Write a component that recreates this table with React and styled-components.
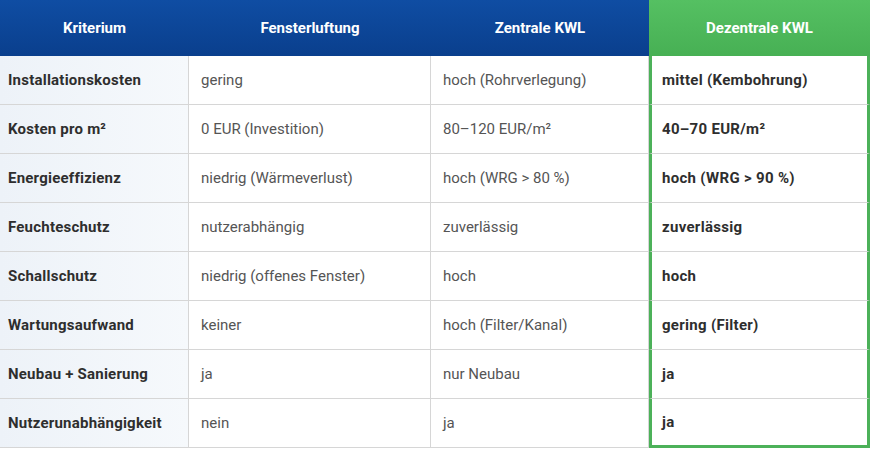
import styled, { createGlobalStyle } from 'styled-components';

const GlobalStyle = createGlobalStyle`
    body {
        margin: 0;
        background: #ffffff;
        font-family: Roboto, 'Liberation Sans', sans-serif;
    }
`

const rows = [
    ['Installationskosten', 'gering', 'hoch (Rohrverlegung)', 'mittel (Kembohrung)'],
    ['Kosten pro m²', '0 EUR (Investition)', '80–120 EUR/m²', '40–70 EUR/m²'],
    ['Energieeffizienz', 'niedrig (Wärmeverlust)', 'hoch (WRG > 80 %)', 'hoch (WRG > 90 %)'],
    ['Feuchteschutz', 'nutzerabhängig', 'zuverlässig', 'zuverlässig'],
    ['Schallschutz', 'niedrig (offenes Fenster)', 'hoch', 'hoch'],
    ['Wartungsaufwand', 'keiner', 'hoch (Filter/Kanal)', 'gering (Filter)'],
    ['Neubau + Sanierung', 'ja', 'nur Neubau', 'ja'],
    ['Nutzerunabhängigkeit', 'nein', 'ja', 'ja'],
];

const App = () => {
    return (
        <>
            <GlobalStyle />
            <Table>
                <colgroup>
                    <col style={{width: '189px'}} />
                    <col style={{width: '242px'}} />
                    <col style={{width: '218px'}} />
                    <col style={{width: '221px'}} />
                </colgroup>
                <thead>
                    <tr>
                        <Th>Kriterium</Th>
                        <Th>Fensterluftung</Th>
                        <Th>Zentrale KWL</Th>
                        <Th $green>Dezentrale KWL</Th>
                    </tr>
                </thead>
                <tbody>
                    {rows.map((row, index) =>
                        <tr key={index}>
                            <Label>{row[0]}</Label>
                            <Cell>{row[1]}</Cell>
                            <Cell>{row[2]}</Cell>
                            <Best $last={index === rows.length - 1}>{row[3]}</Best>
                        </tr>
                    )}
                </tbody>
            </Table>
        </>
    )
}

export default App;

const Table = styled.table`
    width: 870px;
    table-layout: fixed;
    border-collapse: separate;
    border-spacing: 0;
    font-size: 15px;
`

const Th = styled.th`
    height: 56px;
    padding: 0 10px;
    box-sizing: border-box;
    text-align: center;
    color: #ffffff;
    font-weight: 700;
    font-size: 15px;
    background: ${props => props.$green
        ? 'linear-gradient(180deg, #55c062 0%, #47b054 100%)'
        : 'linear-gradient(180deg, #0f4da3 0%, #0a3f8d 100%)'};
`

const Cell = styled.td`
    height: 49px;
    padding: 0 12px;
    box-sizing: border-box;
    color: #555555;
    border-right: 1px solid #d6d6d6;
    border-bottom: 1px solid #d6d6d6;
    white-space: nowrap;
`

const Label = styled(Cell)`
    padding-left: 8px;
    color: #2e2e2e;
    font-weight: 700;
    letter-spacing: 0.22px;
    background: linear-gradient(90deg, #edf2f8 0%, #f6f9fc 100%);
`

const Best = styled.td`
    height: 49px;
    padding: 0 10px;
    box-sizing: border-box;
    color: #2e2e2e;
    font-weight: 700;
    letter-spacing: 0.3px;
    border-left: 3px solid #4cb159;
    border-right: 3px solid #4cb159;
    border-bottom: ${props => props.$last ? '3px solid #4cb159' : '1px solid #d6d6d6'};
    white-space: nowrap;
`
